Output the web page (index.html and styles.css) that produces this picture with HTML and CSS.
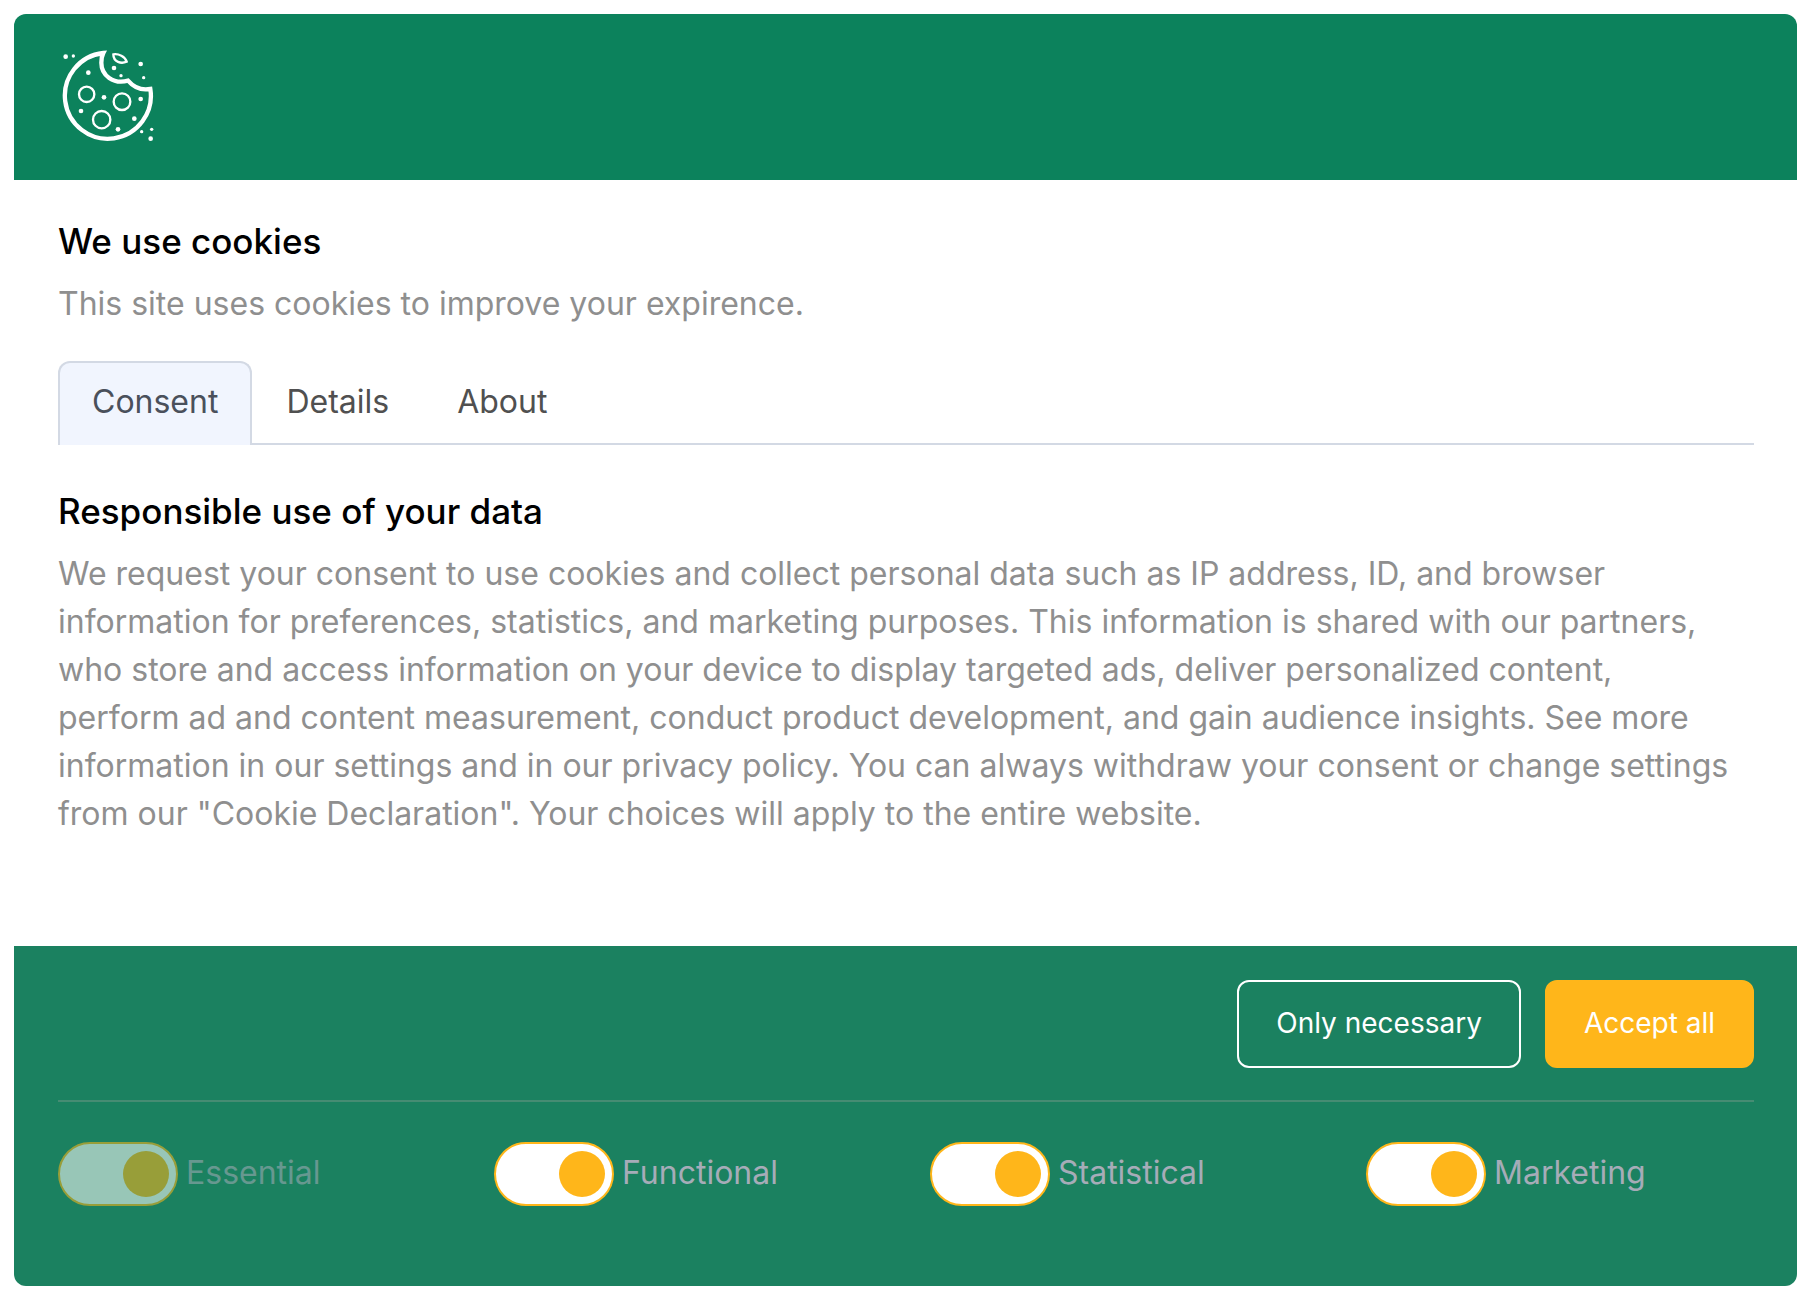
FILE: index.html
```html
<!DOCTYPE html>
<html lang="en">
<head>
<meta charset="utf-8">
<meta name="viewport" content="width=device-width, initial-scale=1">
<title>Cookie consent</title>
<link rel="stylesheet" href="styles.css">
</head>
<body>
<main class="consent">
  <header class="consent-header">
    <svg class="cookie-icon" viewBox="24 24 288 288" aria-hidden="true">
      <path class="cookie-outline" d="M160 39 A129 129 0 1 0 301 147 C274 152 252 143 234 122 C190 134 154 106 154 68 C154 55 156 47 160 39 Z"/>
      <path class="cookie-crumb" d="M190 43 C205 40 226 50 230 65 C214 72 190 67 190 43 Z"/>
      <g class="cookie-chips">
        <circle cx="110" cy="163" r="23"/>
        <circle cx="216" cy="185" r="25"/>
        <circle cx="155" cy="239" r="26"/>
      </g>
      <g class="cookie-dots">
        <circle cx="47" cy="50" r="7"/>
        <circle cx="70" cy="48" r="5"/>
        <circle cx="115" cy="98" r="7"/>
        <circle cx="192" cy="84" r="7"/>
        <circle cx="213" cy="107" r="5"/>
        <circle cx="272" cy="72" r="7"/>
        <circle cx="281" cy="113" r="5"/>
        <circle cx="162" cy="172" r="7"/>
        <circle cx="272" cy="177" r="7"/>
        <circle cx="93" cy="213" r="7"/>
        <circle cx="253" cy="236" r="7"/>
        <circle cx="204" cy="268" r="7"/>
        <circle cx="275" cy="275" r="5"/>
        <circle cx="305" cy="268" r="5"/>
        <circle cx="302" cy="296" r="7"/>
      </g>
    </svg>
  </header>

  <section class="consent-body">
    <h1 class="title">We use cookies</h1>
    <p class="text">This site uses cookies to improve your expirence.</p>

    <div class="tabs" role="tablist">
      <button class="tab tab-active" type="button" role="tab" aria-selected="true">Consent</button>
      <button class="tab" type="button" role="tab" aria-selected="false">Details</button>
      <button class="tab" type="button" role="tab" aria-selected="false">About</button>
    </div>

    <h2 class="title">Responsible use of your data</h2>
    <p class="text">We request your consent to use cookies and collect personal data such as IP address, ID, and browser information for preferences, statistics, and marketing purposes. This information is shared with our partners, who store and access information on your device to display targeted ads, deliver personalized content, perform ad and content measurement, conduct product development, and gain audience insights. See more information in our settings and in our privacy policy. You can always withdraw your consent or change settings from our "Cookie Declaration". Your choices will apply to the entire website.</p>
  </section>

  <footer class="consent-footer">
    <div class="actions">
      <button class="button button-outline" type="button">Only necessary</button>
      <button class="button button-primary" type="button">Accept all</button>
    </div>
    <div class="options">
      <label class="option option-disabled"><input class="switch" type="checkbox" checked disabled><span class="option-name">Essential</span></label>
      <label class="option"><input class="switch" type="checkbox" checked><span class="option-name">Functional</span></label>
      <label class="option"><input class="switch" type="checkbox" checked><span class="option-name">Statistical</span></label>
      <label class="option"><input class="switch" type="checkbox" checked><span class="option-name">Marketing</span></label>
    </div>
  </footer>
</main>
</body>
</html>
```
FILE: styles.css
```css
* {
  box-sizing: border-box;
}

body {
  margin: 0;
  padding: 14px 23px 16px 14px;
  background: #fff;
  font-family: Inter, "Liberation Sans", sans-serif;
  font-size: 32px;
  line-height: 48px;
}

.consent {
  border-radius: 12px;
  overflow: hidden;
}

.consent-header {
  padding: 34px 44px 36px;
  background: #0c825c;
}

.cookie-icon {
  display: block;
  width: 96px;
  height: 96px;
  fill: none;
  stroke: #fff;
}

.cookie-outline {
  stroke-width: 13;
}

.cookie-crumb,
.cookie-chips {
  stroke-width: 7;
}

.cookie-dots {
  fill: #fff;
  stroke: none;
}

.consent-body {
  padding: 36px 43px 108px 44px;
}

.title {
  margin: 0 0 14px;
  color: #000;
  font-size: 35px;
  font-weight: 500;
  line-height: 50px;
}

.text {
  margin: 0;
  padding-right: 20px;
  color: #8f8f8f;
}

.tabs {
  display: flex;
  margin: 33px 0 41px;
  border-bottom: 2px solid #d3d9e4;
}

.tab {
  margin-bottom: -2px;
  padding: 15px 32px 19px;
  border: 2px solid transparent;
  border-bottom: 0;
  border-radius: 12px 12px 0 0;
  background: none;
  color: #505050;
  font: inherit;
}

.tab-active {
  border-color: #d3d9e4;
  background: #f1f5fe;
  color: #4a505b;
}

.consent-footer {
  padding: 34px 43px 80px 44px;
  background: #1b8160;
}

.actions {
  display: flex;
  justify-content: flex-end;
  gap: 24px;
  padding-bottom: 32px;
  border-bottom: 2px solid #468c73;
}

.button {
  padding: 17px 37px 19px;
  border: 2px solid #fff;
  border-radius: 12px;
  background: none;
  color: #fff;
  font: inherit;
  font-size: 28px;
}

.button-primary {
  border-color: #ffb61a;
  background: #ffb61a;
}

.options {
  display: grid;
  grid-template-columns: repeat(4, 1fr);
  gap: 48px;
  padding-top: 40px;
}

.option {
  display: flex;
  align-items: center;
  gap: 8px;
  color: #a6acb8;
}

.option-name {
  padding-bottom: 2px;
}

.option-disabled {
  opacity: 0.55;
}

.switch {
  display: grid;
  flex: none;
  justify-content: end;
  align-content: center;
  width: 120px;
  height: 64px;
  margin: 0;
  padding-right: 7px;
  border: 2px solid #ffb61a;
  border-radius: 32px;
  background: #fff;
  appearance: none;
}

.switch::before {
  content: "";
  width: 46px;
  height: 46px;
  border-radius: 50%;
  background: #ffb61a;
}
```
